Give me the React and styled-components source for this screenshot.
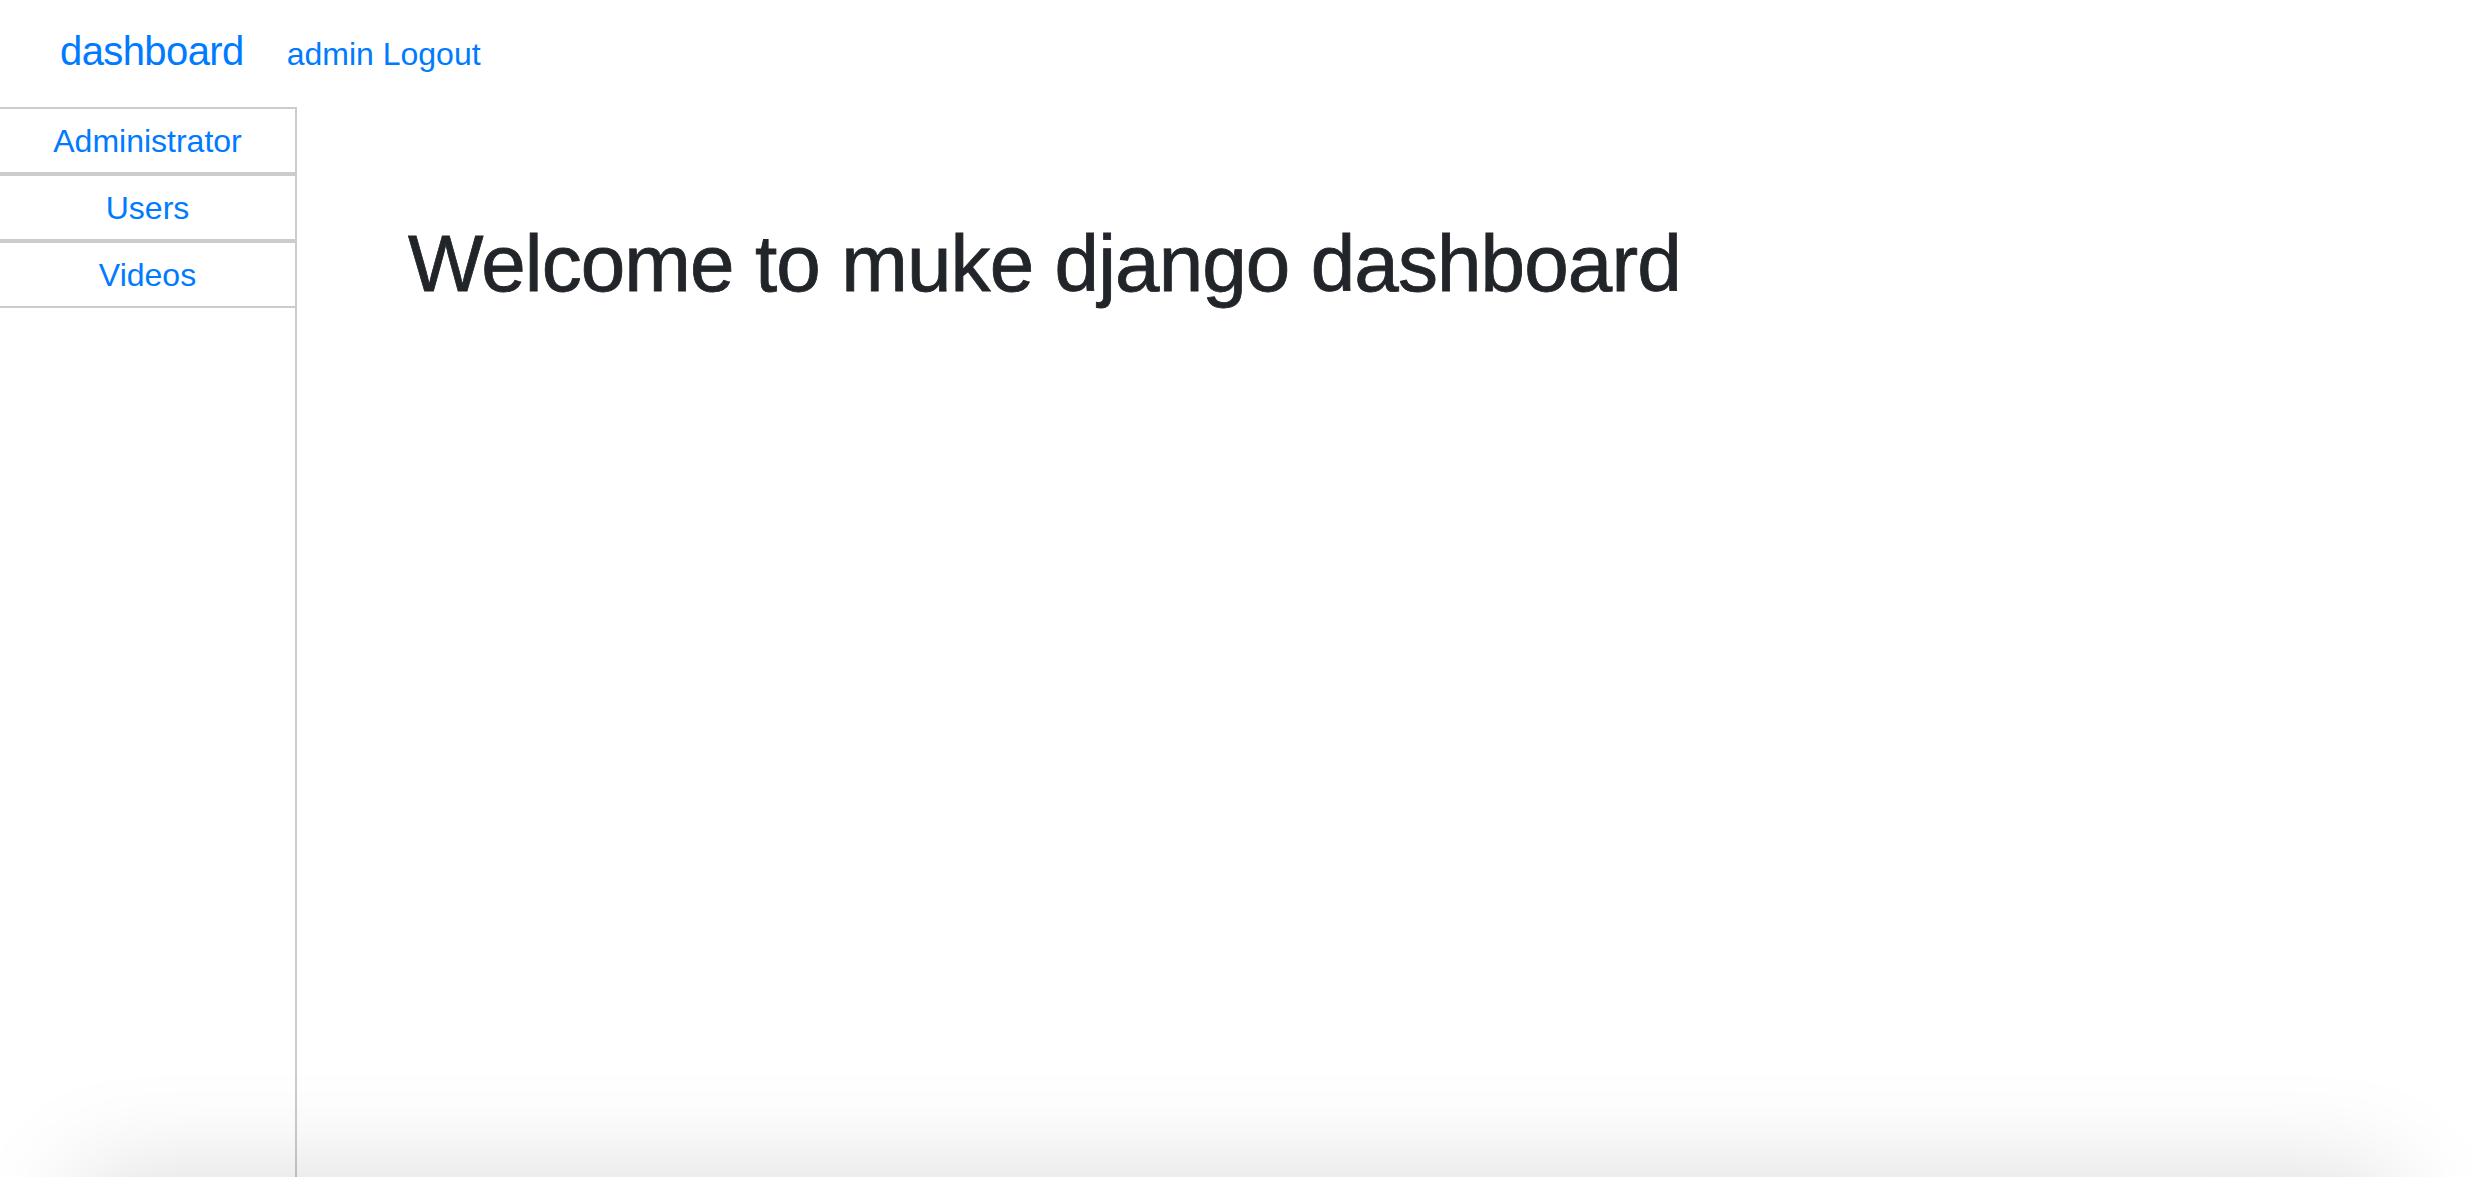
import React from 'react'
import styled, { createGlobalStyle } from 'styled-components'

const GlobalStyle = createGlobalStyle`
    html, body {
        margin:0;
        padding:0;
        background:#fff;
    }
    body{
        font-family:"Liberation Sans", Arial, sans-serif;
        color:#212529;
    }
    *{
        box-sizing:border-box;
    }
`

const links = ['Administrator', 'Users', 'Videos']

function App() {
    return (
        <Page>
            <GlobalStyle />
            <Navbar>
                <Brand href="#">dashboard</Brand>
                <UserLinks>
                    <NavLink href="#">admin</NavLink> <NavLink href="#">Logout</NavLink>
                </UserLinks>
            </Navbar>
            <Body>
                <Sidebar>
                    {links.map((name) => (
                        <SideItem key={name} href="#">{name}</SideItem>
                    ))}
                </Sidebar>
                <Main>
                    <Title>Welcome to muke django dashboard</Title>
                </Main>
            </Body>
            <BottomShade />
        </Page>
    )
}

export default App

const Page = styled.div`
    min-height:100vh;
    display:flex;
    flex-direction:column;
    overflow:hidden;
`

const Navbar = styled.nav`
    height:107px;
    padding:21px 0 0 60px;
    display:flex;
    align-items:baseline;
`

const Brand = styled.a`
    font-size:40px;
    line-height:60px;
    letter-spacing:-0.6px;
    color:#007bff;
    text-decoration:none;
`

const UserLinks = styled.div`
    margin-left:43px;
    font-size:32px;
    line-height:48px;
    color:#007bff;
`

const NavLink = styled.a`
    color:#007bff;
    text-decoration:none;
`

const Body = styled.div`
    flex:1;
    display:flex;
`

const Sidebar = styled.aside`
    width:297px;
    flex-shrink:0;
    border-right:2px solid #cccccc;
    display:flex;
    flex-direction:column;
`

const SideItem = styled.a`
    display:block;
    border-top:2px solid #cccccc;
    border-bottom:2px solid #cccccc;
    padding:8px 0 7px;
    font-size:32px;
    line-height:48px;
    text-align:center;
    color:#007bff;
    text-decoration:none;
`

const Main = styled.main`
    flex:1;
    padding:109px 0 0 111px;
`

const Title = styled.h1`
    margin:0;
    font-size:80px;
    line-height:96px;
    font-weight:500;
    letter-spacing:-0.9px;
    color:#212529;
    -webkit-text-stroke:0.8px #212529;
`

const BottomShade = styled.div`
    position:fixed;
    left:80px;
    right:80px;
    bottom:-200px;
    height:200px;
    box-shadow:0 0 110px rgba(0,0,0,0.15);
    pointer-events:none;
`
